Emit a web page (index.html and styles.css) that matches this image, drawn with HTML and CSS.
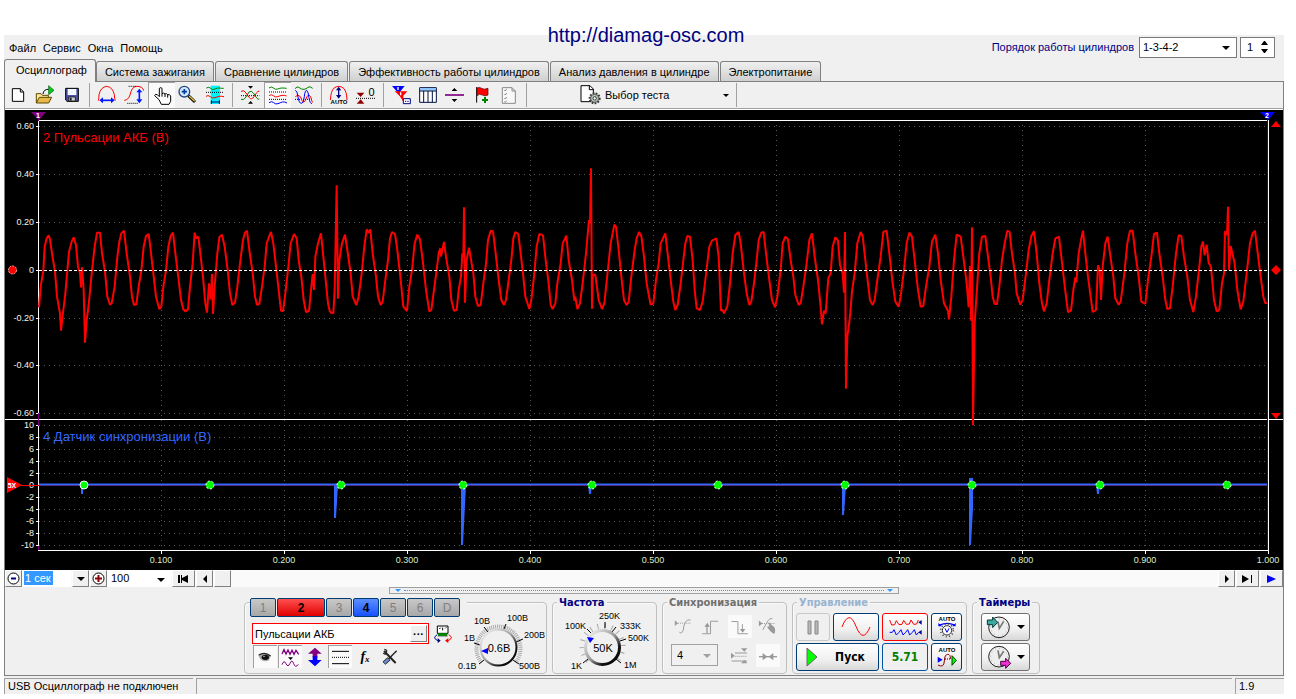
FILE: index.html
```html
<!DOCTYPE html>
<html lang="ru">
<head>
<meta charset="utf-8">
<title>USB Осциллограф</title>
<link rel="stylesheet" href="styles.css">
</head>
<body>
<a class="site-link" href="http://diamag-osc.com">http://diamag-osc.com</a>
<div class="window">
  <header class="top">
    <nav class="menu">
      <button>Файл</button><button>Сервис</button><button>Окна</button><button>Помощь</button>
    </nav>
    <div class="order">
      <label for="order">Порядок работы цилиндров</label>
      <span class="drop drop-order"><select id="order"><option>1-3-4-2</option></select></span>
      <span class="spin"><input id="cyl" type="text" value="1" aria-label="Номер цилиндра">
        <svg width="9" height="14" viewBox="0 0 9 14"><path d="M4 1h1l3 4H1zM1 9h7l-3 4H4z"/></svg></span>
    </div>
  </header>

  <div class="tabs" role="tablist">
    <button class="tab active" role="tab">Осциллограф</button>
    <button class="tab" role="tab">Система зажигания</button>
    <button class="tab" role="tab">Сравнение цилиндров</button>
    <button class="tab" role="tab">Эффективность работы цилиндров</button>
    <button class="tab" role="tab">Анализ давления в цилиндре</button>
    <button class="tab" role="tab">Электропитание</button>
  </div>

  <main class="frame">
    <div class="toolbar">
      <button class="tool" aria-label="Новый"><svg viewBox="15 156 81 78"><path d="M37 176h24l10 10v28H37z" fill="#fff" stroke="#000" stroke-width="3"/><path d="M61 176v10h10" fill="none" stroke="#000" stroke-width="3"/></svg></button>
      <button class="tool" aria-label="Открыть"><svg viewBox="96 156 81 78"><path d="M109 219v-28h14l4 5h18v7" fill="#ffe79a" stroke="#5c4a00" stroke-width="3"/><path d="M109 219l9-17h37l-9 17z" fill="#e8b84a" stroke="#5c4a00" stroke-width="3"/><path d="M129 192q2-15 17-14" fill="none" stroke="#000" stroke-width="3"/><path d="M146 167l16 14-16 13z" fill="#00d020" stroke="#005000" stroke-width="2"/></svg></button>
      <button class="tool" aria-label="Сохранить"><svg viewBox="177 156 81 78"><path d="M197 175h38v39h-34l-4-4z" fill="#4a55a8" stroke="#000" stroke-width="3"/><path d="M203 177h26v18h-26z" fill="#f4f8ff"/><path d="M206 201h20v12h-20z" fill="#ccc" stroke="#000" stroke-width="2"/><path d="M209 203h6v9h-6z" fill="#223"/></svg></button>
      <span class="sep"></span>
      <button class="tool" aria-label="Размах по X"><svg viewBox="282 156 81 78"><path d="M295 212q2-6 2-18 5-23 23-25 18 2 23 25 0 12 3 18" fill="none" stroke="#f00" stroke-width="3"/><path d="M304 211h33" stroke="#0018ff" stroke-width="5"/><path d="M309 202v18l-11-9zM333 202v18l11-9z" fill="#0018ff"/></svg></button>
      <button class="tool" aria-label="Размах по Y"><svg viewBox="363 156 81 78"><path d="M373 211q12-1 17-16 5-24 18-26 20-1 23 13" fill="none" stroke="#f00" stroke-width="3"/><path d="M386 169h22M382 220h32" stroke="#000" stroke-width="3" stroke-dasharray="3 3"/><path d="M418 181v34" stroke="#0018ff" stroke-width="5"/><path d="M409 187h18l-9-11zM409 208h18l-9 12z" fill="#0018ff"/></svg></button>
      <button class="tool pressed" aria-label="Рука"><svg viewBox="444 156 81 78"><path d="M477 209l-13-12q1-6 8-3l6 6v-25q5-4 8 0v16q5-4 9 1 5-3 8 2 6-2 9 4v16l-5 9h-23z" fill="#fff" stroke="#000" stroke-width="3"/><path d="M486 191v9M495 192v9M503 194v9" stroke="#000" stroke-width="3"/></svg></button>
      <button class="tool" aria-label="Масштаб"><svg viewBox="525 156 81 78"><path d="M565 197l20 19" stroke="#000" stroke-width="9"/><path d="M567 198l17 16" stroke="#e5cc45" stroke-width="4"/><circle cx="553" cy="185" r="16" fill="#d3e8ff" stroke="#27477c" stroke-width="4"/><path d="M545 185h16M553 177v16" stroke="#003c9c" stroke-width="5"/></svg></button>
      <button class="tool" aria-label="Интервал"><svg viewBox="606 156 81 78"><path d="M632 167h28v55h-28z" fill="#00f4ff"/><path d="M619 174q8-5 13 1t13 2 13-3 13 1" fill="none" stroke="#008000" stroke-width="3"/><path d="M618 187h54" stroke="#000" stroke-width="3" stroke-dasharray="3 3"/><path d="M618 199q6-5 13 1t14 3 13-4 14 1" fill="none" stroke="#f00" stroke-width="3"/><path d="M634 216h24M634 211v11M658 211v11" stroke="#000080" stroke-width="3"/></svg></button>
      <span class="sep"></span>
      <button class="tool" aria-label="Наложить"><svg viewBox="711 156 81 78"><path d="M744 168h15l-7 8zM744 221h15l-7-8z"/><path d="M723 197h55" stroke="#000" stroke-width="3" stroke-dasharray="3 3"/><path d="M723 184q9-6 15 5l10 14q7 8 14-3l8-12q4-6 8-4" fill="none" stroke="#f00" stroke-width="3"/><path d="M723 208q9 4 15-7l9-15q7-6 13 3l10 15q4 6 8 3" fill="none" stroke="#008000" stroke-width="3"/></svg></button>
      <button class="tool pressed" aria-label="Раздельно"><svg viewBox="792 156 81 78"><path d="M807 174q7-6 13 0t13 3 13-3 14 1" fill="none" stroke="#008000" stroke-width="3"/><path d="M807 186h54M807 208h54" stroke="#000" stroke-width="3" stroke-dasharray="3 3"/><path d="M807 197q7-6 13 0t13 3 13-4 14 2" fill="none" stroke="#f00" stroke-width="3"/><path d="M807 218q8-6 14 0t13 3 13-5 14 3" fill="none" stroke="#00f" stroke-width="3"/></svg></button>
      <button class="tool" aria-label="Вместе"><svg viewBox="873 156 81 78"><path d="M885 176q6-9 13-3t14 5 12-6 14 3" fill="none" stroke="#008000" stroke-width="3"/><path d="M885 208h53" stroke="#000" stroke-width="3" stroke-dasharray="3 3"/><path d="M886 200q8-9 15 0l5 12q6 10 11-3 4-14 10-14 6 4 7 12 1 10 5 10" fill="none" stroke="#f00" stroke-width="3"/><path d="M886 181q6 1 8 20 3 19 10 19 6 0 9-20 2-20 7-19 5 4 7 22 3 20 9 17" fill="none" stroke="#00f" stroke-width="3"/></svg></button>
      <span class="sep"></span>
      <button class="tool" aria-label="Авто размах"><svg viewBox="978 156 81 78"><path d="M991 210q2-27 10-35 15-12 30 0 9 8 10 35" fill="none" stroke="#f00" stroke-width="3"/><path d="M1016 174v28" stroke="#000080" stroke-width="4"/><path d="M1008 181h16l-8-11zM1008 195h16l-8 11z" fill="#000080"/><text class="auto" x="1017" y="222">AUTO</text></svg></button>
      <button class="tool" aria-label="Ноль"><svg viewBox="1059 156 81 78"><path d="M1070 188h23l-11 13zM1070 221h23l-11-13z" fill="#900000"/><path d="M1068 205h57" stroke="#000" stroke-width="3" stroke-dasharray="3 3"/><text class="zero" x="1115" y="197">0</text></svg></button>
      <span class="sep"></span>
      <button class="tool" aria-label="Маркеры"><svg viewBox="1164 156 81 78"><path d="M1176 168h38l-14 17v13l-8-12z" fill="#00f"/><path d="M1184 184h38l-12 13v18l-11-17z" fill="#f00"/><path d="M1194 171v9M1202 187v9" stroke="#fff" stroke-width="4"/><path d="M1210 206h21v15h-21z" fill="#fff" stroke="#000080" stroke-width="3"/><path d="M1215 214h11" stroke="#000080" stroke-width="3" stroke-dasharray="4 3"/></svg></button>
      <button class="tool" aria-label="Таблица"><svg viewBox="45 186 81 78"><path d="M59 203h50v44H59z" fill="#fff" stroke="#001040" stroke-width="3"/><path d="M60 204h48v8H60z" fill="#8fc5ff"/><path d="M58 213h52M71 213v34M84 213v34M97 213v34" stroke="#001040" stroke-width="3"/></svg></button>
      <button class="tool" aria-label="Разделитель"><svg viewBox="126 186 81 78"><path d="M135 225h57" stroke="#800080" stroke-width="5"/><path d="M163 204l9 9h-17zM163 246l9-9h-17z"/></svg></button>
      <button class="tool" aria-label="Метка"><svg viewBox="207 186 81 78"><path d="M230 201v47" stroke="#000" stroke-width="3"/><path d="M231 204q7-4 14 1t19 0v20q-8 5-17 0t-16 2z" fill="#f00" stroke="#500000" stroke-width="2"/><path d="M255 231v18M246 240h18" stroke="#008000" stroke-width="6"/></svg></button>
      <button class="tool" aria-label="Отчет"><svg viewBox="288 186 81 78"><path d="M307 203h29l10 10v37h-39z" fill="#f8f8f8" stroke="#888" stroke-width="3"/><path d="M336 203v10h10M313 210l3 3 4-6M313 222l3 3 4-6M313 234l3 3 4-6M313 245l3 2 4-5" fill="none" stroke="#888" stroke-width="3"/></svg></button>
      <span class="sep"></span>
      <button class="test"><svg width="22" height="24" viewBox="540 189 66 72"><path d="M543 197h27l10 10v38h-37z" fill="#fff" stroke="#000" stroke-width="3"/><path d="M568 197v12h12" fill="none" stroke="#000" stroke-width="3"/><circle cx="584" cy="235" r="15" fill="#b9c4b9" stroke="#333" stroke-width="6" stroke-dasharray="5 4"/><circle cx="584" cy="235" r="12" fill="#b9c4b9" stroke="#333" stroke-width="2"/><circle cx="584" cy="235" r="5" fill="#fff" stroke="#333" stroke-width="3"/></svg><span>Выбор теста</span><i class="tri tri-small"></i></button>
      <span class="sep"></span>
    </div>

    <svg class="plot" viewBox="5 110 1278 460" role="img" aria-label="Осциллограмма">
      <path class="grid" d="M39 126.500H1267M39 174.500H1267M39 222.500H1267M39 318.500H1267M39 365.500H1267M39 413.500H1267M39 425.500H1267M39 437.500H1267M39 449.500H1267M39 461.500H1267M39 473.500H1267M39 497.500H1267M39 509.500H1267M39 521.500H1267M39 533.500H1267M39 545.500H1267M161.500 125V550M284.500 125V550M407.500 125V550M530.500 125V550M653.500 125V550M776.500 125V550M899.500 125V550M1022.500 125V550M1145.500 125V550"/>
      <path class="axis" d="M38 120.500H1269M5 419.500H1283M38 550.500H1269M38.500 120V551M1268.500 120V551M36 126.500h3M36 174.500h3M36 222.500h3M36 270.500h3M36 318.500h3M36 365.500h3M36 413.500h3M36 425.500h3M36 437.500h3M36 449.500h3M36 461.500h3M36 473.500h3M36 485.500h3M36 497.500h3M36 509.500h3M36 521.500h3M36 533.500h3M36 545.500h3M161.500 551v3M284.500 551v3M407.500 551v3M530.500 551v3M653.500 551v3M776.500 551v3M899.500 551v3M1022.500 551v3M1145.500 551v3M1268.500 551v3"/>
      <path d="M38.500 113v8M38.500 413v13M38.500 546v4" stroke="#800080"/>
      <path d="M1267.500 118V550" stroke="#00f"/>
      <g class="ylab">
        <text x="34" y="129">0.60</text><text x="34" y="177">0.40</text><text x="34" y="225">0.20</text><text x="34" y="273">0</text><text x="34" y="321">-0.20</text><text x="34" y="368">-0.40</text><text x="34" y="416">-0.60</text>
        <text x="34" y="428">10</text><text x="34" y="440">8</text><text x="34" y="452">6</text><text x="34" y="464">4</text><text x="34" y="476">2</text><text x="34" y="488">0</text><text x="34" y="500">-2</text><text x="34" y="512">-4</text><text x="34" y="524">-6</text><text x="34" y="536">-8</text><text x="34" y="548">-10</text>
      </g>
      <g class="xlab">
        <text x="161" y="563">0.100</text><text x="284" y="563">0.200</text><text x="407" y="563">0.300</text><text x="530" y="563">0.400</text><text x="653" y="563">0.500</text><text x="776" y="563">0.600</text><text x="899" y="563">0.700</text><text x="1022" y="563">0.800</text><text x="1145" y="563">0.900</text><text x="1268" y="563">1.000</text>
      </g>
      <text class="ch ch-red" x="43" y="142">2 Пульсации АКБ (В)</text>
      <text class="ch ch-blue" x="43" y="441">4 Датчик синхронизации (В)</text>
      <g class="wave" transform="translate(0 110) scale(.33333)">
        <path d="M117 592L122 530 130 482 134 410 140 385 146 376 150 388 156 430 165 485 171 560 180 610 183 662 190 600 196 550 202 482 207 425 215 395 221 382 228 405 234 470 240 490 243 532 246 472 251 540 255 698 260 630 266 585 276 482 284 410 291 368 300 368 306 430 315 485 322 560 330 584 335 580 344 530 352 440 358 395 364 370 372 362 380 430 390 500 396 560 402 585 409 583 416 530 424 482 431 410 438 378 446 372 452 420 460 490 468 560 478 597 484 590 490 530 498 482 505 410 512 378 519 368 526 430 536 510 543 570 550 598 556 604 564 598 570 530 578 460 584 368 588 385 595 380 601 430 609 500 616 580 621 608 627 520 632 568 636 492 639 612 644 530 652 430 658 382 666 374 674 410 683 480 690 550 697 585 705 578 712 530 720 460 729 390 735 368 741 362 748 420 758 490 765 560 771 584 778 582 786 530 794 470 800 400 808 378 813 366 820 400 828 470 836 540 843 602 849 604 856 550 864 480 872 400 882 372 890 385 896 450 904 500 911 570 918 606 927 603 933 540 938 492 942 540 946 440 954 400 963 370 970 440 978 520 984 580 990 607"/>
        <path transform="translate(960)" d="M30 607L40 610 44 540 50 226 54 566 58 450 66 400 75 374 82 420 92 490 98 560 109 585 116 560 125 490 133 410 140 358 146 368 151 358 158 430 168 500 174 560 182 585 188 575 196 510 204 450 210 385 216 366 225 372 232 420 242 510 250 590 261 603 268 530 276 480 284 400 292 374 300 388 308 450 318 540 328 604 334 600 342 540 350 480 356 430 361 415 363 440 372 396 378 440 388 500 394 570 402 602 410 600 416 540 423 500 427 430 430 440 432 292 435 578 440 450 447 413 454 455 460 490 466 560 474 588 482 585 490 520 498 460 504 390 512 362 519 364 527 430 536 510 544 570 552 585 558 570 566 510 574 450 580 385 586 366 595 372 602 430 610 500 616 560 628 597 634 570 642 500 650 410 658 372 669 376 677 450 686 520 692 585 698 597 706 580 712 520 722 460 728 400 739 377 746 450 756 510 763 572 766 560 772 597 780 580 788 520 798 430 807 330 810 340 813 175 816 596 818 494 826 494 836 570 846 597 853 580 862 495 872 400 883 344 888 350 896 420 904 500 912 570 920 585 926 575 934 500 944 420 950 385 957 366 964 378 972 440 980 520 992 585"/>
        <path transform="translate(1920)" d="M32 585L40 580 48 510 56 460 62 400 76 370 84 440 92 510 100 575 106 600 113 585 122 520 130 450 136 400 142 378 150 380 158 450 164 540 170 595 180 600 188 575 196 510 203 450 208 410 216 392 229 385 236 440 243 602 248 600 252 610 262 590 270 520 278 430 286 375 296 366 302 400 312 490 320 550 328 585 334 575 342 520 350 450 356 390 364 368 371 366 378 430 388 510 396 570 405 592 412 560 422 480 428 400 436 380 444 388 452 450 460 500 466 555 476 585 482 580 490 530 500 460 508 390 516 370 524 440 534 510 541 580 546 643 552 602 557 610 565 505 572 490 578 410 586 382 594 392 600 465 608 490 612 548 615 366 618 836 622 680 630 620 636 545 644 490 652 400 662 366 668 378 676 450 684 520 690 570 698 585 704 570 712 510 722 440 730 366 740 362 748 430 758 520 766 575 776 590 782 560 792 480 800 400 808 368 816 380 824 450 834 540 842 590 850 588 858 530 868 470 876 395 886 374 894 430 902 510 912 580 924 603 927 628 934 560 942 450 950 374 962 380 970 440 980 520 986 592 990 468"/>
        <path transform="translate(2880)" d="M30 468L33 632 36 352 39 946 44 640 52 520 58 430 66 380 76 378 84 440 92 500 98 560 104 582 111 582 118 530 126 450 134 400 142 362 149 366 156 430 165 490 170 550 181 584 188 570 198 490 206 420 214 378 222 364 230 430 238 520 246 580 252 604 260 580 268 510 278 430 286 385 297 380 304 440 312 510 318 560 324 606 333 602 340 540 346 502 349 517 356 430 364 385 369 362 376 430 384 500 392 560 398 606 408 600 414 466 419 480 423 570 428 470 436 400 443 380 450 430 460 500 466 565 476 584 482 575 492 500 502 400 510 362 518 362 526 430 536 500 544 575 556 582 564 510 574 440 582 372 591 368 598 430 608 500 616 570 622 597 630 595 638 530 648 430 656 376 664 378 672 440 682 500 690 570 700 606 708 560 718 470 724 410 729 395 734 436 740 404 746 458 753 470 762 570 770 604 778 600 786 520 792 490 795 364 801 375 804 290 807 480 812 408 824 460 832 540 842 598 850 575 860 490 870 400 878 370 885 362 892 420 902 500 910 560 916 580 922 578"/>
      </g>
      <path class="zero-line" d="M39 270.500H1267"/>
      <path d="M39 484.500H1267" stroke="#36f" stroke-width="2"/>
      <path fill="#36f" d="M81 485h2v9h-2zM334 485h4l-2 33h-2zM461 485h5l-3 60h-2zM588 485h4l-1 9h-2zM842 485h4l-2 30h-2zM969 478h4v30l-2 37h-2zM1096 485h4l-1 9h-2z"/>
      <path d="M21 485.500H39" stroke="#f00"/>
      <path d="M39 485.500H1267" stroke="#803080" stroke-opacity=".5"/>
      <g fill="#0f0" stroke="#fff"><circle cx="84" cy="485" r="4"/><g stroke-dasharray="2 2"><circle cx="210" cy="485" r="4"/><circle cx="341" cy="485" r="4"/><circle cx="463" cy="485" r="4"/><circle cx="592" cy="485" r="4"/><circle cx="718" cy="485" r="4"/><circle cx="845" cy="485" r="4"/><circle cx="972" cy="485" r="4"/><circle cx="1100" cy="485" r="4"/><circle cx="1227" cy="485" r="4"/></g></g>
      <path d="M31 112h15l-7 8z" fill="#800080"/><path d="M1260 112h15l-7 8z" fill="#00f"/>
      <text class="mark" x="38" y="118">1</text><text class="mark" x="1267" y="118">2</text>
      <path d="M7 477l15 8-15 8z" fill="#f00"/><text class="mark" x="12" y="488">5X</text>
      <circle cx="12.500" cy="270" r="4" fill="#f00" stroke="#faa" stroke-dasharray="2 1"/>
      <path d="M1276 121l5 6h-10zM1276 419l5-6h-10zM1276 265l5 5-5 5-5-5z" fill="#f00"/>
    </svg>

    <div class="scroll">
      <button class="sq" aria-label="Меньше"><svg width="13" height="13" viewBox="0 0 13 13"><circle cx="6.500" cy="6.500" r="5.500" fill="#fff" stroke="#000"/><path d="M4 6.500h5" stroke="#000080" stroke-width="2"/></svg></button>
      <input class="time" type="text" value="1 сек" aria-label="Развертка">
      <button class="sq" aria-label="Список"><i class="tri"></i></button>
      <button class="sq" aria-label="Больше"><svg width="13" height="13" viewBox="0 0 13 13"><circle cx="6.500" cy="6.500" r="5.500" fill="#fff" stroke="#000"/><path d="M3 6.500h7M6.500 3v7" stroke="#900000" stroke-width="2"/></svg></button>
      <span class="drop drop-pct"><select aria-label="Масштаб"><option>100</option></select></span>
      <button class="wide" aria-label="В начало"><svg width="11" height="8" viewBox="0 0 11 8"><path d="M0 0h2v8H0zM10 0v8L4 5v3H3V0h1v3z"/></svg></button>
      <button class="sq" aria-label="Назад"><svg width="4" height="8" viewBox="0 0 4 8"><path d="M4 0v8L0 4z"/></svg></button>
      <div class="track"><button class="sq" aria-label="Ползунок"></button></div>
      <button class="sq" aria-label="Вперед"><svg width="4" height="8" viewBox="0 0 4 8"><path d="M0 0v8l4-4z"/></svg></button>
      <button class="wide" aria-label="В конец"><svg width="11" height="8" viewBox="0 0 11 8"><path d="M9 0h1v8H9zM0 0v8l7-4z"/></svg></button>
      <button class="wide" aria-label="Прокрутка"><svg width="9" height="8" viewBox="0 0 9 8"><path d="M0 0v8l9-4z" fill="#00f"/></svg></button>
    </div>
    <div class="splitter"><i></i><b></b><i></i></div>

    <div class="panel">
      <section class="group channels">
        <div class="ch-col">
          <div class="ch-row"><button>1</button><button class="on-red">2</button><button>3</button><button class="on-blue">4</button><button>5</button><button>6</button><button>D</button></div>
          <div class="name-row">
            <span class="name"><input type="text" value="Пульсации АКБ" aria-label="Имя канала"><button>···</button></span>
            <button class="flat" aria-label="Инверсия"><svg width="20" height="20" viewBox="576 117 60 60"><path d="M589 123h32v22h-32z" fill="#fff" stroke="#000" stroke-width="3"/><path d="M591 144h28v9h-28z" fill="#008000"/><path d="M590 154h30" stroke="#999" stroke-width="3"/><path d="M595 132l4-4M605 128v8M613 130l3-3" stroke="#000" stroke-width="3"/><path d="M589 149q-17 10 2 18" fill="none" stroke="#000080" stroke-width="3"/><path d="M590 159l9 8-9 7z" fill="#000080"/><path d="M623 149q17 10-2 18" fill="none" stroke="#f00" stroke-width="3"/><path d="M622 159l-10 8 10 7z" fill="#f00"/></svg></button>
          </div>
          <div class="opt-row">
            <button class="opt pressed" aria-label="Видимость"><svg viewBox="45 186 72 66"><path d="M62 216q17-15 36 0l-5 13q-15 7-27-5z" fill="#aaa"/><path d="M62 214q17-13 36 2" fill="none" stroke="#222" stroke-width="4"/><ellipse cx="82" cy="220" rx="11" ry="8" fill="#111"/><circle cx="78" cy="217" r="2" fill="#fff"/></svg></button>
            <button class="opt pressed" aria-label="Фильтр"><svg viewBox="117 183 72 66"><path d="M129 207l6-13 6 13 6-12 6 13 6-12 6 12 6-12 8 12" fill="none" stroke="#800080" stroke-width="4"/><path d="M147 217h15l-7 8z"/><path d="M129 239q6-16 12-3t12-1 11 1 14 2" fill="none" stroke="#800080" stroke-width="3"/></svg></button>
            <button class="opt" aria-label="Смещение"><svg viewBox="189 183 72 66"><path d="M225 188l20 18h-13v11h-14v-11h-14z" fill="#800080"/><path d="M225 244l20-19h-13v-11h-14v11h-14z" fill="#00f"/></svg></button>
            <button class="opt pressed" aria-label="Линии"><svg viewBox="267 186 72 66"><path d="M279 202h51M279 239h51" stroke="#000" stroke-width="3"/><path d="M279 220h51" stroke="#000" stroke-width="3" stroke-dasharray="3 3"/></svg></button>
            <button class="opt" aria-label="Функция"><em>f</em><small>x</small></button>
            <button class="opt" aria-label="Настройка"><svg viewBox="412 183 72 66"><path d="M430 198l35 36" stroke="#222" stroke-width="6"/><path d="M428 204q3 5 8 2l2-9q-2-4-7-4" fill="none" stroke="#222" stroke-width="4"/><path d="M468 197l-25 26" stroke="#222" stroke-width="4"/><path d="M445 221l-15 14" stroke="#111" stroke-width="12"/><path d="M444 222l-13 12" stroke="#6a8dcc" stroke-width="8"/></svg></button>
          </div>
        </div>
        <svg class="dial" width="92" height="62" viewBox="456 611 92 62">
          <defs><linearGradient id="rim" x1="0" y1="0" x2="1" y2="1"><stop offset="0" stop-color="#fff"/><stop offset=".5" stop-color="#999"/><stop offset=".75" stop-color="#111"/><stop offset="1" stop-color="#000"/></linearGradient></defs>
          <path d="M481.500 662.500A22 22 0 1 1 515.500 662.500" fill="none" stroke="#aaa" stroke-width="4" stroke-dasharray="1 1"/>
          <path d="M479 664l5-4M474 643l6 2M484 627l4 5M506 624l-2 5M523 639l-7 3M519 664l-6-4" stroke="#000"/>
          <circle cx="498.500" cy="647.500" r="18" fill="#f0f0f0" stroke="url(#rim)" stroke-width="2"/>
          <path d="M481 651l7-3v6z" fill="#00f"/>
          <text x="458" y="669">0.1В</text><text x="464" y="641">1В</text><text x="474" y="624">10В</text><text x="507" y="621">100В</text><text x="524" y="638">200В</text><text x="519" y="669">500В</text><text class="val" x="499" y="652">0.6В</text>
        </svg>
      </section>

      <section class="group freq">
        <h2>Частота</h2>
        <svg class="dial" width="102" height="62" viewBox="553 611 102 62">
          <path d="M588.500 660.500A20 20 0 1 1 616.500 660.500" fill="none" stroke="#aaa" stroke-width="6" stroke-dasharray="1 6"/>
          <path d="M583 663l5-4M587 629l4 4M605 622v6M616 627l-4 5M626 639l-6 2M621 663l-5-4" stroke="#000"/>
          <circle cx="602.500" cy="647.500" r="17" fill="#f0f0f0" stroke="url(#rim)" stroke-width="3"/>
          <path d="M587 637l7 1-4 5z" fill="#00f"/>
          <text x="571" y="669">1K</text><text x="565" y="629">100K</text><text x="599" y="619">250K</text><text x="620" y="629">333K</text><text x="628" y="641">500K</text><text x="624" y="668">1M</text><text class="val" x="603" y="652">50K</text>
        </svg>
      </section>

      <section class="group sync">
        <h2 class="muted">Синхронизация</h2>
        <div class="sync-row">
          <button class="opt" disabled aria-label="Вход"><svg viewBox="363 90 75 66"><path d="M375 102l10 9-10 9z" fill="#999"/><path d="M385 111h40" stroke="#999" stroke-width="3" stroke-dasharray="3 3"/><path d="M389 139q9 8 13-10 2-21 12-27 7-3 10 0" fill="none" stroke="#999" stroke-width="3"/></svg></button>
          <button class="opt" disabled aria-label="Фронт"><svg viewBox="450 90 75 66"><path d="M460 144h26v-39h24" fill="none" stroke="#999" stroke-width="3"/><path d="M475 143v-24" stroke="#999" stroke-width="4"/><path d="M467 122h17l-8-12z" fill="#999"/></svg></button>
          <button class="opt lit" disabled aria-label="Спад"><svg viewBox="535 90 75 66"><path d="M546 106h20v38h31M580 114v20" fill="none" stroke="#999" stroke-width="3"/><path d="M572 129h17l-8 12z" fill="#999"/></svg></button>
          <button class="opt" disabled aria-label="Уровень"><svg viewBox="619 90 75 66"><path d="M628 103l11 9-11 9z" fill="#999"/><path d="M638 112h42" stroke="#999" stroke-width="3" stroke-dasharray="3 3"/><path d="M640 132l17-29q4-7 13-7" fill="none" stroke="#999" stroke-width="3"/><path d="M658 110q5-3 6 3l9 8q8 5 5 21l-4 2q-13-8-20-20 3-5 7-2z" fill="#999"/></svg></button>
        </div>
        <div class="sync-row">
          <span class="drop drop-sync"><select disabled aria-label="Канал синхронизации"><option>4</option></select></span>
          <button class="opt" disabled aria-label="Окно"><svg viewBox="538 171 72 66"><path d="M547 194l11 9-11 9zM577 181h19l-9 10zM577 226h19l-9-10z" fill="#999"/><path d="M559 195h36M549 219h46" stroke="#999" stroke-width="3"/><path d="M558 205h37" stroke="#999" stroke-width="3" stroke-dasharray="3 3"/></svg></button>
          <button class="opt lit" disabled aria-label="Сжать"><svg viewBox="621 177 72 66"><path d="M630 212h54" stroke="#999" stroke-width="4"/><path d="M641 201l14 11-14 11zM673 201l-14 11 14 11z" fill="#999"/></svg></button>
        </div>
      </section>

      <section class="group control">
        <h2 class="pale">Управление</h2>
        <div class="ctl-grid">
          <button class="ctl off" disabled aria-label="Пауза"><svg width="12" height="15" viewBox="0 0 12 15"><path d="M1 1h3v13H1zM8 1h3v13H8z" fill="#b8b8b8" stroke="#888"/></svg></button>
          <button class="ctl" aria-label="Синус"><svg width="30" height="20" viewBox="153 96 90 60"><path d="M156 126q21-55 42-2t42 2" fill="none" stroke="#f00" stroke-width="3"/></svg></button>
          <button class="ctl red" aria-label="Прокрутка"><svg width="33" height="20" viewBox="294 96 99 60"><path d="M296 105l6 15 9-1 5-12 8 12 9-1 5-12 8 12 9-1 5-12 8 13 9-1 5-12" fill="none" stroke="#f00" stroke-width="3"/><path d="M296 142h8l5-8 7 16 8-8 6-8 6 16 8-8 6-8 6 16 8-8 6-8 6 16 7-8" fill="none" stroke="#00f" stroke-width="3"/><path d="M392 105v14l-10-7zM392 135v14l-10-7z" fill="#000080"/></svg></button>
          <button class="ctl" aria-label="Авто уровень"><svg width="24" height="24" viewBox="434 90 72 72"><text class="auto" x="470" y="109">AUTO</text><path d="M448 120q22-10 45 0" fill="none" stroke="#00f" stroke-width="4"/><path d="M444 114v10h11zM496 114v10h-11z" fill="#00f"/><circle cx="470" cy="136" r="19" fill="none" stroke="#444" stroke-width="5" stroke-dasharray="3 7"/><circle cx="470" cy="136" r="14" fill="#fff" stroke="#333" stroke-width="3"/><path d="M464 130l6 12 6-12" fill="none" stroke="#00f" stroke-width="3"/></svg></button>
          <button class="ctl start"><svg width="12" height="20" viewBox="0 0 12 20"><path d="M1 1v18l10-9z" fill="#0f0" stroke="#666"/></svg><span>Пуск</span></button>
          <output class="ctl value">5.71</output>
          <button class="ctl" aria-label="Авто пуск"><svg width="24" height="24" viewBox="434 180 72 72"><text class="auto" x="470" y="200">AUTO</text><path d="M442 215l15 9-15 9z" fill="#00f"/><path d="M443 240q18 10 19-12 1-20 10-20 9 0 8 14" fill="none" stroke="#900000" stroke-width="3"/><path d="M464 222h16" stroke="#000" stroke-width="3" stroke-dasharray="3 3"/><path d="M485 212v29l13-15z" fill="#0f0" stroke="#004000" stroke-width="3"/></svg></button>
        </div>
      </section>

      <section class="group timers">
        <h2>Таймеры</h2>
        <button class="timer" aria-label="Таймер пуска"><svg width="26" height="24" viewBox="588 90 78 72"><circle cx="627" cy="127" r="31" fill="#eee" stroke="#222" stroke-width="3"/><circle cx="627" cy="127" r="25" fill="none" stroke="#aaa" stroke-width="3" stroke-dasharray="3 10"/><path d="M624 110l4 20 13-21" fill="none" stroke="#777" stroke-width="5"/><path d="M592 105h16v-9l15 16-15 16v-9h-16z" fill="#3fa9a0" stroke="#003c3c" stroke-width="3"/></svg><i class="tri"></i></button>
        <button class="timer" aria-label="Таймер остановки"><svg width="26" height="24" viewBox="588 180 78 72"><circle cx="627" cy="215" r="31" fill="#eee" stroke="#222" stroke-width="3"/><circle cx="627" cy="215" r="25" fill="none" stroke="#aaa" stroke-width="3" stroke-dasharray="3 10"/><path d="M624 196l4 22 13-19" fill="none" stroke="#777" stroke-width="5"/><path d="M632 229h15v-9l15 15-15 15v-9h-15z" fill="#f030d0" stroke="#400040" stroke-width="3"/></svg><i class="tri"></i></button>
      </section>
    </div>
  </main>

  <footer class="status"><span class="s-main">USB Осциллограф не подключен</span><span class="s-mid"></span><span class="s-ver">1.9</span></footer>
</div>
</body>
</html>
```
FILE: styles.css
```css
* { box-sizing: border-box; }
body {
  margin: 0;
  background: #fff;
  color: #000;
  font: 11px/14px "Liberation Sans", Arial, sans-serif;
}
button, input, select {
  margin: 0;
  padding: 0;
  border: 0;
  border-radius: 0;
  background: none;
  color: inherit;
  font: inherit;
  appearance: none;
}
button { display: flex; align-items: center; justify-content: center; }
svg { display: block; flex: none; }
.window { margin: 35px 12px 0 4px; background: #f0f0f0; }
.site-link {
  position: absolute;
  top: 24px;
  left: 0;
  right: 4px;
  width: max-content;
  margin: 0 auto;
  color: #000080;
  font-size: 20px;
  line-height: 23px;
  text-decoration: none;
}

/* menu and cylinder order */
.top { display: flex; justify-content: space-between; height: 24px; }
.menu { display: flex; gap: 7px; padding: 2px 0 0 5px; }
.order { display: flex; align-items: center; padding-right: 9px; color: #000080; }
.order label { margin-right: 5px; }
.drop { position: relative; display: flex; }
.drop select { width: 100%; padding-left: 3px; color: #000; opacity: 1; }
.drop::after, .tri {
  width: 0;
  height: 0;
  border: 4px solid transparent;
  border-top-color: #000;
  border-bottom: 0;
}
.drop::after { content: ""; position: absolute; right: 6px; top: 50%; margin-top: -1px; pointer-events: none; }
.drop-order { width: 98px; height: 21px; margin-right: 3px; border: 1px solid #7a7a7a; background: #fff; }
.spin { display: flex; align-items: center; width: 35px; height: 21px; border: 1px solid #7a7a7a; background: #fff; color: #000; }
.spin input { width: 19px; padding-left: 6px; }

/* tabs */
.tabs { display: flex; align-items: flex-end; gap: 1px; height: 22px; }
.tab {
  height: 20px;
  padding: 0 8px;
  border: 1px solid #808080;
  border-bottom: 0;
  border-radius: 3px 3px 0 0;
  background: linear-gradient(#f0f0f0, #d0d0d0);
}
.tab.active { z-index: 1; height: 23px; margin: 0 -1px -1px 0; padding: 0 8px 2px 11px; background: #f0f0f0; }

.frame { border: 1px solid #808080; }

/* toolbar */
.toolbar { display: flex; height: 28px; border-bottom: 1px solid #fff; box-shadow: inset 0 -1px #a0a0a0; padding-bottom: 1px; }
.tool { width: 27px; height: 26px; }
.tool svg { width: 27px; height: 26px; }
.pressed { background: #fafafa; box-shadow: inset 1px 1px #a0a0a0; }
.lit { background: #fafafa; }
.sep { width: 1px; margin: 1px 4px 1px 3px; background: #a0a0a0; }
.auto { font-size: 18px; font-weight: bold; text-anchor: middle; }
.zero { font-size: 33px; text-anchor: middle; }
.test { gap: 3px; width: 153px; margin-left: 49px; padding-right: 4px; }
.test span { flex: 1; text-align: left; }
.tri-small { border-width: 3px; border-bottom: 0; }

/* plot */
.plot { width: 100%; height: auto; background: #000; }
.grid { stroke: #585858; stroke-dasharray: 1 4; shape-rendering: crispEdges; }
.axis { stroke: #fff; shape-rendering: crispEdges; }
.zero-line { stroke: #fff; stroke-dasharray: 3 2; shape-rendering: crispEdges; }
.wave { fill: none; stroke: #f00; stroke-width: 6; stroke-linejoin: bevel; }
.ylab, .xlab { fill: #f4f4e8; font-size: 9px; }
.ylab { text-anchor: end; }
.xlab { fill: #dcecc8; text-anchor: middle; }
.ch { font-size: 13px; }
.ch-red { fill: #f00; }
.ch-blue { fill: #36f; }
.mark { fill: #fff; font-size: 7px; font-weight: bold; text-anchor: middle; }

/* time scrolling */
.scroll { display: flex; gap: 1px; height: 17px; background: #fafafa; }
.sq, .wide { width: 17px; background: #f0f0f0; border: 1px solid; border-color: #fff #808080 #808080 #fff; }
.wide { width: 23px; }
.time {
  width: 48px;
  padding: 0 0 2px 2px;
  background: #fff linear-gradient(#39f, #39f) no-repeat 1px 1px / 29px 14px;
  color: #fff;
}
.drop-pct { width: 63px; background: #fff; }
.drop-pct select { padding: 0 0 2px 3px; }
.track { display: flex; flex: 1; }
.splitter { display: flex; align-items: center; width: 510px; height: 7px; margin: 0 auto; padding: 0 5px; border: 1px solid #a0a0a0; }
.splitter i { border: 3px solid transparent; border-top-color: #39f; border-bottom: 0; }
.splitter b { flex: 1; margin: 0 3px; border-top: 1px dotted #39f; }

/* control panel */
.panel { display: flex; justify-content: center; gap: 5px; padding: 8px 4px 1px 0; }
.group { height: 72px; border: 1px solid #c0c0c0; border-radius: 4px; box-shadow: inset 1px 1px #fafafa; }
.group h2 {
  width: max-content;
  height: 12px;
  margin: -6px 0 0 4px;
  padding: 0 2px;
  background: #f0f0f0;
  color: #000080;
  font: bold 11px/12px "DejaVu Sans Condensed", "DejaVu Sans", sans-serif;
}
.group h2.muted { color: #707070; }
.group h2.pale { color: #98b4d0; }
.channels { display: flex; width: 303px; padding-left: 5px; }
.ch-col { width: 206px; }
.ch-row { display: flex; gap: 1px; width: max-content; margin-top: -5px; padding-right: 7px; background: #f0f0f0; }
.ch-row button {
  width: 26px;
  height: 19px;
  border: 1px solid #003c74;
  border-radius: 2px;
  background: linear-gradient(#c8c8c8, #a8a8a8);
  color: #808080;
  font-size: 12px;
}
.ch-row .on-red { width: 48px; background: linear-gradient(#ff5050, #e00000); color: #000; font-weight: bold; }
.ch-row .on-blue { background: linear-gradient(#5c90ff, #1850ff); color: #000; font-weight: bold; }
.name-row { display: flex; align-items: center; gap: 4px; margin: 6px 0 1px 2px; }
.name { display: flex; width: 177px; height: 21px; padding: 1px; border: 1px solid #f00; background: #fff; }
.name input { flex: 1; min-width: 0; padding-left: 1px; }
.name button { width: 17px; border: 1px solid; border-color: #fff #808080 #808080 #fff; background: #f0f0f0; font-weight: bold; }
.opt-row { display: flex; gap: 1px; padding-left: 3px; }
.opt { width: 24px; height: 23px; }
.opt svg { width: 24px; height: 22px; }
.opt em { font: italic bold 14px "Liberation Serif", serif; }
.opt small { padding-top: 4px; font: italic bold 9px "Liberation Serif", serif; }
.dial { font-size: 9px; }
.channels .dial { margin-top: 8px; }
.freq .dial { margin-top: 2px; }
.dial .val { font-size: 11px; text-anchor: middle; }
.freq { width: 105px; }
.sync { width: 125px; }
.sync-row { display: flex; justify-content: space-between; height: 23px; margin: 6px 6px 0 8px; }
.drop-sync { width: 47px; height: 22px; margin-right: 6px; border: 1px solid #a0a0a0; }
.drop-sync select { padding-left: 5px; }
.drop-sync::after { border-top-color: #a0a0a0; }
.control { width: 175px; }
.ctl-grid { display: grid; grid-template-columns: 34px 46px 46px 31px; grid-auto-rows: 28px; gap: 2px 3px; margin: 4px 0 0 3px; }
.ctl, .timer { border: 1px solid #003c74; border-radius: 3px; background: linear-gradient(#fff, #f0f0f0 60%, #d8d8d8); }
.ctl.off { border-color: #c8c8c8; background: #f0f0f0; }
.ctl.red { border-color: #f00; }
.ctl.start { grid-column: span 2; justify-content: flex-start; padding-left: 9px; font: bold 12px "DejaVu Sans Condensed", "DejaVu Sans", sans-serif; }
.ctl.start span { flex: 1; padding-left: 4px; text-align: center; }
.ctl.value {
  display: flex;
  align-items: center;
  justify-content: center;
  border-color: #0054a8;
  background: #f0f0f0;
  color: #008000;
  font: bold 12px "DejaVu Sans Condensed", "DejaVu Sans", sans-serif;
}
.timers { width: 68px; }
.timer { gap: 5px; width: 49px; height: 28px; margin: 4px 0 0 8px; border-color: #707070; }
.timer + .timer { margin-top: 2px; }

/* status bar */
.status { display: flex; gap: 3px; height: 18px; padding-top: 2px; }
.status span { border: 1px solid #a0a0a0; border-width: 1px 0 0 1px; padding: 0 0 0 3px; }
.s-main { width: 189px; }
.s-mid { flex: 1; }
.s-ver { width: 49px; }
```
